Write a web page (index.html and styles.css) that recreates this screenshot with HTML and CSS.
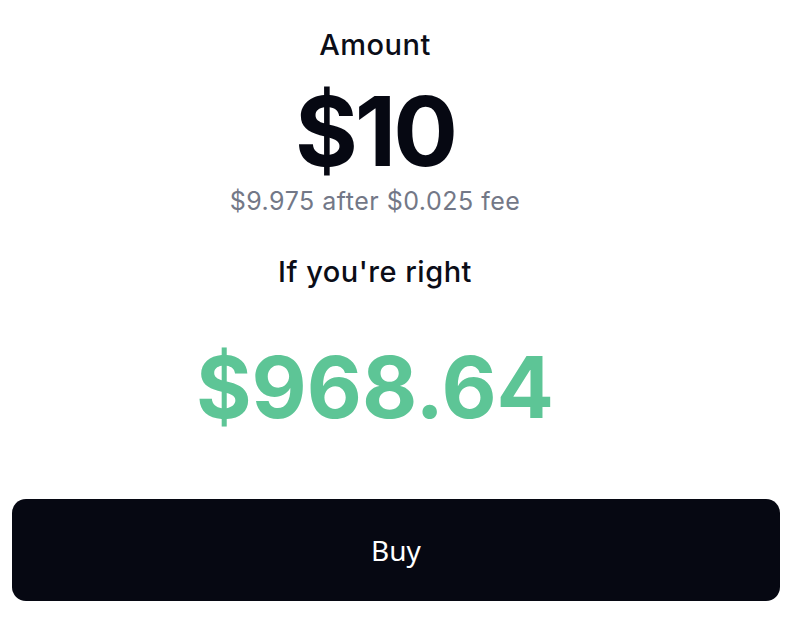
FILE: index.html
```html
<!DOCTYPE html>
<html lang="en">
  <head>
    <meta charset="UTF-8" />
    <meta name="viewport" content="width=device-width, initial-scale=1.0" />
    <title>Buy</title>
    <link rel="stylesheet" href="styles.css">
  </head>
  <body>
    <div class="order">
      <div class="summary">
        <div class="label">Amount</div>
        <div class="amount">$10</div>
        <div class="fee">$9.975 after $0.025 fee</div>

        <div class="label payout-label">If you're right</div>
        <div class="payout">$968.64</div>
      </div>

      <button class="buy-btn" id="buy-btn">Buy</button>
    </div>
  </body>
</html>
```

FILE: styles.css
```css
/* General Styles */
body {
  font-family: Inter, "Noto Sans", sans-serif;
  margin: 0;
  padding: 0;
  background-color: #fff;
  color: #0b0d17;
}

.order {
  display: flex;
  flex-direction: column;
  padding: 28px 16px 0 12px;
}

/* Text column (sits a little left of the button centre) */
.summary {
  display: flex;
  flex-direction: column;
  align-items: center;
  margin-right: 42px;
}

/* Labels */
.label {
  font-size: 29px;
  line-height: 34px;
  font-weight: 500;
  letter-spacing: 0.5px;
}

.payout-label {
  margin-top: 39px;
}

/* Amount */
.amount {
  margin-top: 21px;
  font-size: 96px;
  line-height: 96px;
  font-weight: 700;
  letter-spacing: -3px;
  color: #060812;
}

.fee {
  margin-top: 7px;
  font-size: 25px;
  line-height: 30px;
  letter-spacing: 0.5px;
  color: #737887;
}

/* Payout */
.payout {
  margin-top: 54px;
  font-size: 85px;
  line-height: 90px;
  font-weight: 700;
  color: #5dc596;
}

/* Buy Button */
.buy-btn {
  margin-top: 66px;
  width: 100%;
  height: 102px;
  background-color: #060812;
  color: white;
  font-family: "Noto Sans", sans-serif;
  font-size: 28px;
  border: none;
  border-radius: 14px;
  cursor: pointer;
}

.buy-btn:hover {
  background-color: #1a1d2b;
}
```
